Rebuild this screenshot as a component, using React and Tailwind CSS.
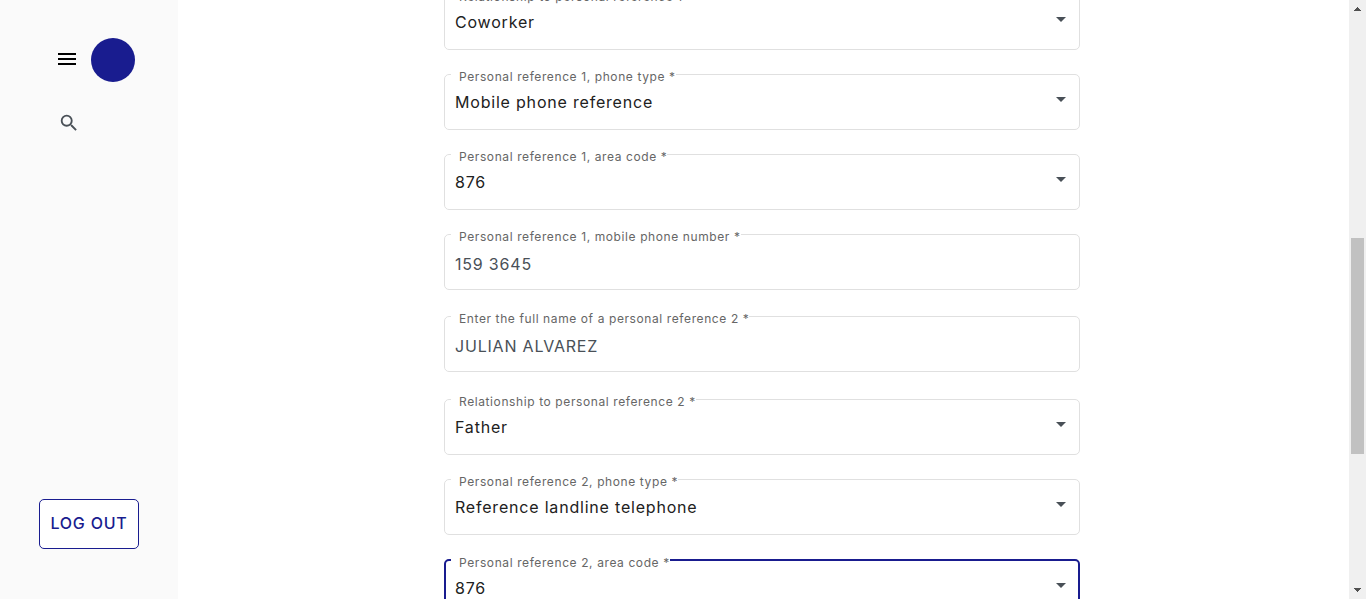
import { useId } from "react";
import { MdMenu, MdSearch, MdArrowDropDown } from "react-icons/md";

const fields = [
  { label: "Relationship to personal reference 1", value: "Coworker", kind: "select", gap: "" },
  { label: "Personal reference 1, phone type", value: "Mobile phone reference", kind: "select", gap: "mt-[15px]" },
  { label: "Personal reference 1, area code", value: "876", kind: "select", gap: "mt-[15px]" },
  { label: "Personal reference 1, mobile phone number", value: "159 3645", kind: "text", gap: "mt-[15px]" },
  { label: "Enter the full name of a personal reference 2", value: "JULIAN ALVAREZ", kind: "text", gap: "mt-[17px]" },
  { label: "Relationship to personal reference 2", value: "Father", kind: "select", gap: "mt-[18px]" },
  { label: "Personal reference 2, phone type", value: "Reference landline telephone", kind: "select", gap: "mt-[15px]" },
  { label: "Personal reference 2, area code", value: "876", kind: "select", gap: "mt-4", active: true },
];

function Field({ label, value, kind, gap, active }) {
  const id = useId();
  return (
    <fieldset
      className={`h-[65px] min-w-0 shrink-0 rounded-[5px] ${gap} ${
        active ? "border-2 border-[#191c8f] px-[9px]" : "border border-[#e0e0e0] px-[10px]"
      }`}
    >
      <legend className="-ml-1 pt-1.5 pl-2">
        <label htmlFor={id} className="block text-xs leading-3 tracking-wider text-[#666]">
          {label} *
        </label>
      </legend>
      {kind === "select" ? (
        <div className="relative">
          <select
            id={id}
            defaultValue={value}
            className="block h-[38px] w-full appearance-none bg-transparent pr-8 text-base tracking-wider text-[#212121] outline-none"
          >
            <option>{value}</option>
          </select>
          <MdArrowDropDown className="pointer-events-none absolute top-1 -right-1 size-6 text-[#495057]" />
        </div>
      ) : (
        <input
          id={id}
          type="text"
          defaultValue={value}
          className="block h-[42px] w-full bg-transparent text-base tracking-wider text-[#495057] outline-none"
        />
      )}
    </fieldset>
  );
}

export default function App() {
  return (
    <div className="flex h-screen overflow-hidden bg-white font-['Inter','Liberation_Sans',sans-serif]">
      <aside className="flex w-[178px] shrink-0 flex-col items-start bg-[#fafafa] pt-[38px] pb-[50px]">
        <div className="flex items-center gap-3 pl-[55px]">
          <button type="button" aria-label="Menu" className="pb-0.5 text-black">
            <MdMenu className="size-6" />
          </button>
          <span className="size-11 rounded-full bg-[#191c8f]" />
        </div>
        <button type="button" aria-label="Search" className="mt-[30px] ml-[58px] text-[#495057]">
          <MdSearch className="size-[22px]" />
        </button>
        <button
          type="button"
          className="mt-auto h-[50px] w-[100px] self-center rounded-[5px] border border-[#191c8f] bg-white pb-0.5 text-base font-medium tracking-wider whitespace-nowrap text-[#191c8f]"
        >
          LOG OUT
        </button>
      </aside>
      <main className="flex min-w-0 flex-1 justify-center overflow-hidden pr-[3px]">
        <form className="-mt-[15px] flex w-full max-w-[636px] flex-col">
          {fields.map((field) => (
            <Field key={field.label} {...field} />
          ))}
        </form>
      </main>
      <div className="flex w-[17px] shrink-0 flex-col items-center justify-between bg-[#f0f0f0] py-[7px]" aria-hidden="true">
        <svg viewBox="0 0 7 4" className="h-1 w-[7px] fill-[#505050]" shapeRendering="crispEdges">
          <path d="M3 0h1v1h1v1h1v1h1v1H0V3h1V2h1V1h1z" />
        </svg>
        <div className="mt-[227px] mb-auto h-[216px] w-[13px] bg-[#c1c1c1]" />
        <svg viewBox="0 0 7 4" className="h-1 w-[7px] fill-[#505050]" shapeRendering="crispEdges">
          <path d="M0 0h7v1H6v1H5v1H4v1H3V3H2V2H1V1H0z" />
        </svg>
      </div>
    </div>
  );
}
